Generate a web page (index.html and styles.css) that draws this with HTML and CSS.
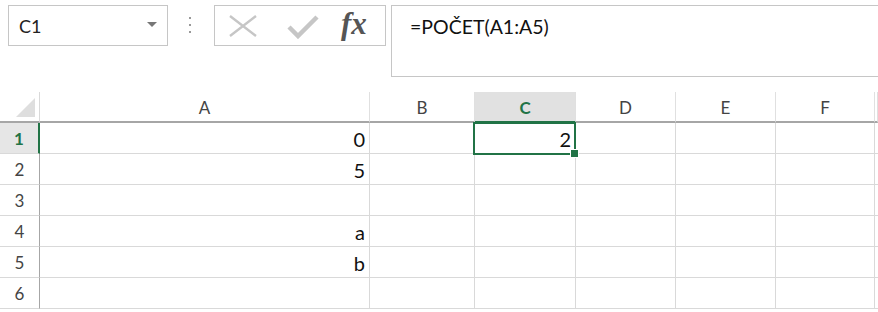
FILE: index.html
```html
<!DOCTYPE html>
<html lang="cs">
<head>
    <meta charset="UTF-8">
    <meta name="viewport" content="width=device-width, initial-scale=1.0">
    <title>POČET</title>
    <link rel="stylesheet" href="styles.css">
</head>
<body>
    <div class="toolbar">
        <div class="name-box">
            <span class="name-text">C1</span>
            <span class="name-arrow"></span>
        </div>
        <div class="grip">
            <span></span><span></span><span></span>
        </div>
        <div class="fx-box">
            <svg class="icon-cancel" width="30" height="22" viewBox="0 0 30 22">
                <path d="M2 1 L28 21 M28 1 L2 21" stroke="#c6c6c6" stroke-width="2.4" fill="none"/>
            </svg>
            <svg class="icon-enter" width="32" height="24" viewBox="0 0 32 24">
                <path d="M2 12 L11 21 L30 2" stroke="#c6c6c6" stroke-width="4.5" fill="none"/>
            </svg>
            <span class="fx">fx</span>
        </div>
        <div class="formula-bar">=POČET(A1:A5)</div>
    </div>

    <div class="sheet">
        <div class="corner"><span class="corner-tri"></span></div>
        <div class="col-head">A</div>
        <div class="col-head">B</div>
        <div class="col-head active">C</div>
        <div class="col-head">D</div>
        <div class="col-head">E</div>
        <div class="col-head">F</div>
        <div class="col-head"></div>

        <div class="row-head active">1</div>
        <div class="cell">0</div>
        <div class="cell"></div>
        <div class="cell selected">2</div>
        <div class="cell"></div>
        <div class="cell"></div>
        <div class="cell"></div>
        <div class="cell"></div>

        <div class="row-head">2</div>
        <div class="cell">5</div>
        <div class="cell"></div>
        <div class="cell"></div>
        <div class="cell"></div>
        <div class="cell"></div>
        <div class="cell"></div>
        <div class="cell"></div>

        <div class="row-head">3</div>
        <div class="cell"></div>
        <div class="cell"></div>
        <div class="cell"></div>
        <div class="cell"></div>
        <div class="cell"></div>
        <div class="cell"></div>
        <div class="cell"></div>

        <div class="row-head">4</div>
        <div class="cell">a</div>
        <div class="cell"></div>
        <div class="cell"></div>
        <div class="cell"></div>
        <div class="cell"></div>
        <div class="cell"></div>
        <div class="cell"></div>

        <div class="row-head">5</div>
        <div class="cell">b</div>
        <div class="cell"></div>
        <div class="cell"></div>
        <div class="cell"></div>
        <div class="cell"></div>
        <div class="cell"></div>
        <div class="cell"></div>

        <div class="row-head">6</div>
        <div class="cell"></div>
        <div class="cell"></div>
        <div class="cell"></div>
        <div class="cell"></div>
        <div class="cell"></div>
        <div class="cell"></div>
        <div class="cell"></div>
    </div>
</body>
</html>
```

FILE: styles.css
```css
* {
    margin: 0;
    padding: 0;
    box-sizing: border-box;
}

body {
    font-family: Lato, "Open Sans", sans-serif;
    background: #fff;
    color: #000;
    width: 878px;
    height: 312px;
    overflow: hidden;
}

/* Formula toolbar */
.toolbar {
    display: flex;
    align-items: flex-start;
    height: 92px;
    padding: 5px 0 0 8px;
}

.name-box {
    display: flex;
    align-items: center;
    justify-content: space-between;
    width: 160px;
    height: 41px;
    border: 1px solid #c6c6c6;
    padding: 0 10px 0 10px;
}

.name-text {
    font-size: 18px;
    color: #222;
}

.name-arrow {
    width: 0;
    height: 0;
    border-left: 5px solid transparent;
    border-right: 5px solid transparent;
    border-top: 5px solid #777;
    margin-top: -3px;
}

.grip {
    display: flex;
    flex-direction: column;
    gap: 5px;
    width: 46px;
    padding: 12px 0 0 21px;
}

.grip span {
    width: 2px;
    height: 2px;
    background: #999;
}

.fx-box {
    display: flex;
    align-items: center;
    width: 172px;
    height: 41px;
    border: 1px solid #c6c6c6;
    padding: 0 0 0 13px;
}

.icon-cancel {
    margin-right: 29px;
}

.icon-enter {
    margin-top: 2px;
    margin-right: 22px;
}

.fx {
    font-family: "Liberation Serif", serif;
    font-style: italic;
    font-weight: bold;
    font-size: 31px;
    color: #555;
    margin-top: -4px;
}

.formula-bar {
    flex: 1;
    height: 72px;
    margin-left: 5px;
    border: 1px solid #c6c6c6;
    border-right: none;
    padding: 9px 0 0 18px;
    font-size: 19.5px;
    color: #111;
}

/* Sheet grid */
.sheet {
    display: grid;
    grid-template-columns: 40px 330px 105px 101px 100px 100px 99px 3px;
    grid-template-rows: 31px repeat(6, 31px);
}

.corner {
    position: relative;
    border-right: 1px solid #d9d9d9;
    border-bottom: 2px solid #a6a6a6;
}

.corner-tri {
    position: absolute;
    right: 4px;
    bottom: 4px;
    width: 0;
    height: 0;
    border-left: 19px solid transparent;
    border-bottom: 19px solid #dedede;
}

.col-head {
    display: flex;
    align-items: center;
    justify-content: center;
    border-right: 1px solid #e0e0e0;
    border-bottom: 2px solid #a6a6a6;
    font-size: 17px;
    color: #444;
    padding-top: 1px;
}

.col-head.active {
    background: #e1e1e1;
    color: #217346;
    font-weight: bold;
    border-bottom-color: #217346;
}

.row-head {
    display: flex;
    align-items: center;
    justify-content: center;
    border-right: 1px solid #a6a6a6;
    border-bottom: 1px solid #d9d9d9;
    font-size: 17px;
    color: #444;
    padding-top: 1px;
}

.row-head.active {
    background: #e6e6e6;
    color: #217346;
    font-weight: bold;
    border-right: 2px solid #217346;
}

.cell {
    display: flex;
    align-items: center;
    justify-content: flex-end;
    border-right: 1px solid #d9d9d9;
    border-bottom: 1px solid #d9d9d9;
    padding: 2px 4px 0 0;
    font-size: 20px;
    color: #111;
}

.cell.selected {
    position: relative;
}

.cell.selected::after {
    content: "";
    position: absolute;
    left: -2px;
    top: -1px;
    right: -1px;
    bottom: -2px;
    border: 2px solid #217346;
}

.cell.selected::before {
    content: "";
    position: absolute;
    right: -4px;
    bottom: -5px;
    width: 7px;
    height: 7px;
    background: #217346;
    border: 1px solid #fff;
    z-index: 1;
}
```
